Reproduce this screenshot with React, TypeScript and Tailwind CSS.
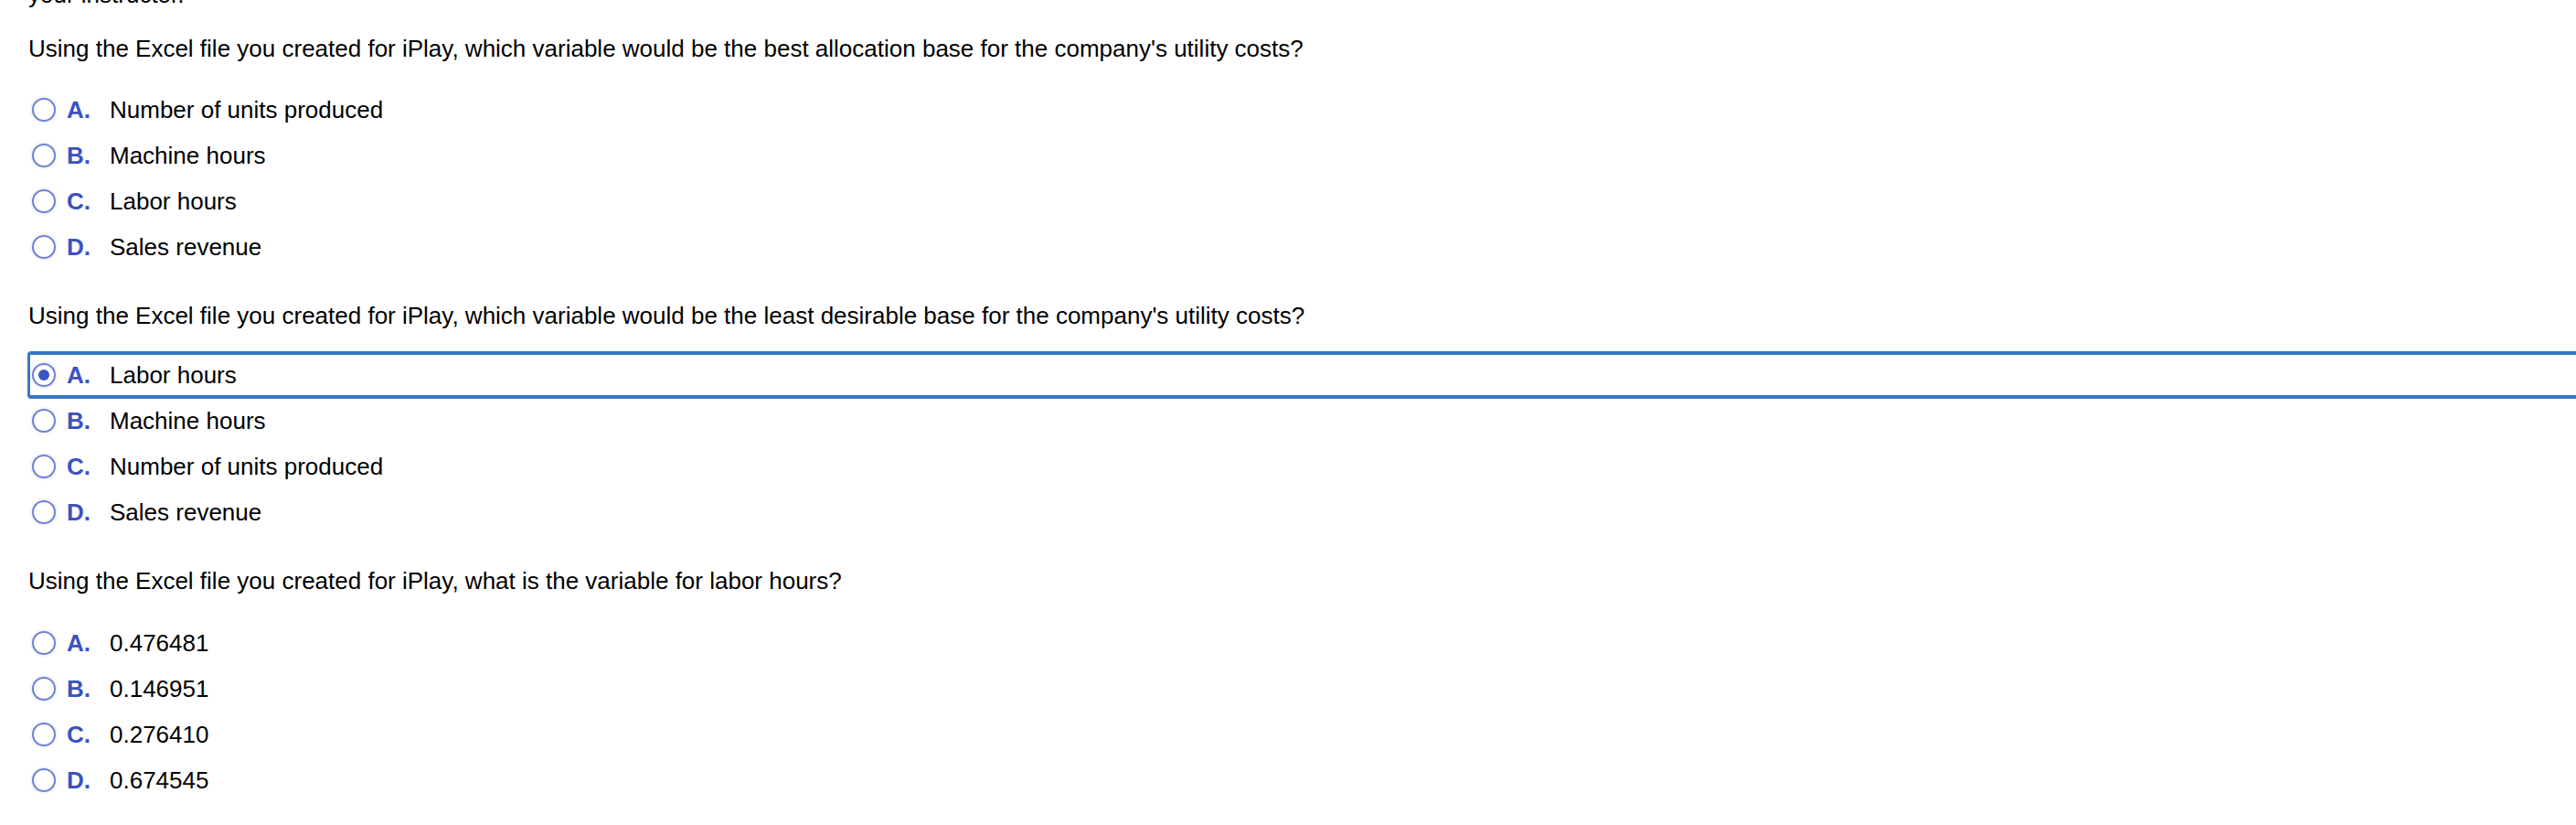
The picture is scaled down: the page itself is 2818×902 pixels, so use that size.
import React from "react";

type Question = {
  text: string;
  options: string[];
  selected?: number;
  gap: string;
};

const letters = ["A.", "B.", "C.", "D."];

const questions: Question[] = [
  {
    text: "Using the Excel file you created for iPlay, which variable would be the best allocation base for the company's utility costs?",
    options: ["Number of units produced", "Machine hours", "Labor hours", "Sales revenue"],
    gap: "mt-[24px]",
  },
  {
    text: "Using the Excel file you created for iPlay, which variable would be the least desirable base for the company's utility costs?",
    options: ["Labor hours", "Machine hours", "Number of units produced", "Sales revenue"],
    selected: 0,
    gap: "mt-[22px]",
  },
  {
    text: "Using the Excel file you created for iPlay, what is the variable for labor hours?",
    options: ["0.476481", "0.146951", "0.276410", "0.674545"],
    gap: "mt-[25px]",
  },
];

const Radio = ({ checked }: { checked?: boolean }) => (
  <span className="flex h-[26px] w-[26px] shrink-0 items-center justify-center rounded-full border-2 border-[#6f82d8] bg-white shadow-[0_0_3px_1px_rgba(120,120,140,0.18)]">
    {checked && <span className="h-[12px] w-[12px] rounded-full bg-[#3b56c8]" />}
  </span>
);

const Option = ({ letter, label, checked }: { letter: string; label: string; checked?: boolean }) => (
  <div
    className={
      checked
        ? "-my-px -ml-px -mr-[40px] flex h-[52px] items-center rounded-[4px] border-y-4 border-l-[3px] border-[#3878c4] pl-[2px]"
        : "flex h-[50px] items-center pl-[4px]"
    }
  >
    <Radio checked={checked} />
    <span className="ml-[12px] w-[47px] font-bold text-[#3a52c2]">{letter}</span>
    <span>{label}</span>
  </div>
);

export default function App() {
  return (
    <div className="h-[902px] w-full overflow-hidden bg-white pl-[31px] font-['Liberation_Sans',Arial,Helvetica,sans-serif] text-[26px] text-black">
      <p className="-mt-[24px] leading-[36px]">your instructor.</p>
      {questions.map((q, qi) => (
        <div key={qi} className={qi === 0 ? "mt-[23px]" : "mt-[32px]"}>
          <p className="leading-[36px]">{q.text}</p>
          <div className={q.gap}>
            {q.options.map((opt, oi) => (
              <Option key={oi} letter={letters[oi]} label={opt} checked={q.selected === oi} />
            ))}
          </div>
        </div>
      ))}
    </div>
  );
}
